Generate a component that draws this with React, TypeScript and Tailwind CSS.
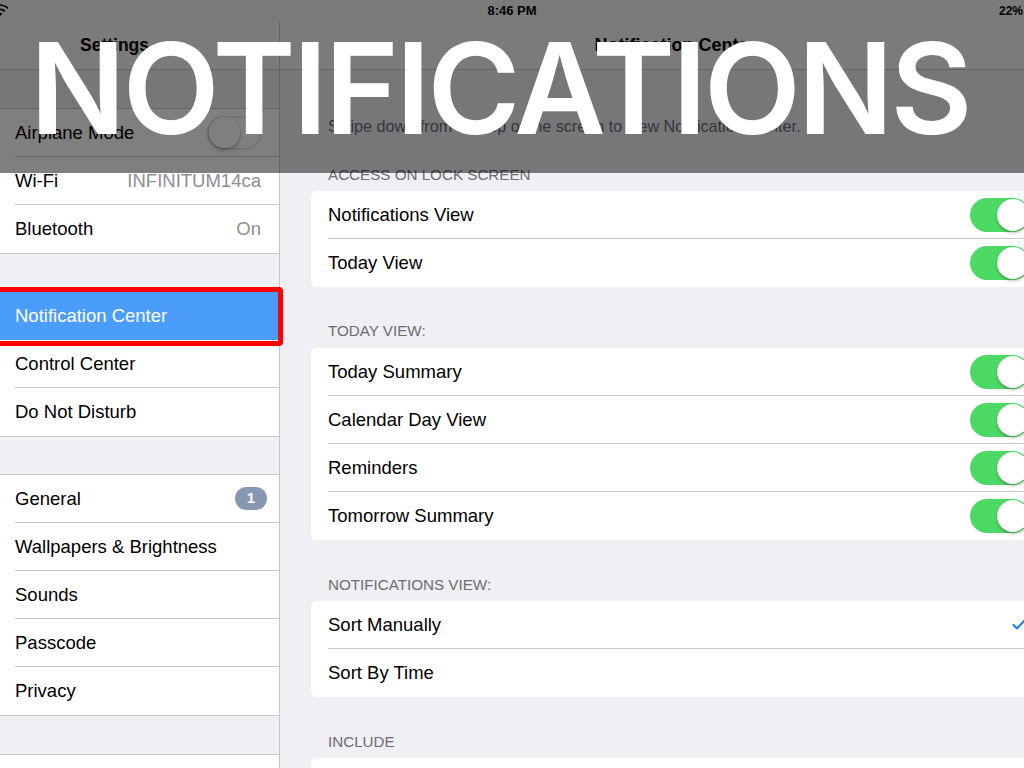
import React from "react";

const sans = "font-['Liberation_Sans',Arial,sans-serif]";

function Toggle({ on }: { on: boolean }) {
  if (on) {
    return (
      <div className="w-[60px] h-[34px] rounded-full bg-[#4cd964] flex items-center justify-end p-[1px]">
        <div className="w-[32px] h-[32px] rounded-full bg-white shadow-[0_2px_3px_rgba(0,0,0,0.25)]" />
      </div>
    );
  }
  return (
    <div className="w-[55px] h-[34px] rounded-full bg-white border-2 border-[#e5e5ea] flex items-center">
      <div className="w-[31px] h-[31px] rounded-full bg-white shadow-[0_2px_4px_rgba(0,0,0,0.3)]" />
    </div>
  );
}

function Check() {
  return (
    <svg width="14" height="11" viewBox="0 0 14 11">
      <polyline points="1.5,6 5,9.5 12.5,1.5" fill="none" stroke="#1a7cf5" strokeWidth="2" strokeLinecap="round" strokeLinejoin="round" />
    </svg>
  );
}

type SideRow = { label: string; value?: string; toggle?: boolean; badge?: string; selected?: boolean };

function SideGroup({ rows, className = "" }: { rows: SideRow[]; className?: string }) {
  return (
    <div className={`bg-white border-y border-[#c8c7cc] ${className}`}>
      {rows.map((r, i) => (
        <div key={r.label} className={`h-[48px] flex items-center pl-[15px] ${r.selected ? "bg-[#4b9dfb]" : ""}`}>
          <div
            className={`flex-1 h-full flex items-center justify-between ${r.badge ? "pr-[12px]" : "pr-[18px]"} ${
              i < rows.length - 1 && !r.selected && !rows[i + 1]?.selected ? "border-b border-[#c8c7cc]" : ""
            }`}
          >
            <span className={`text-[18.5px] ${r.selected ? "text-white" : "text-black"}`}>{r.label}</span>
            {r.value && <span className="text-[18.5px] text-[#8e8e93]">{r.value}</span>}
            {r.toggle !== undefined && (
              <div className="-mr-[1px]">
                <Toggle on={r.toggle} />
              </div>
            )}
            {r.badge && (
              <span className="w-[32px] h-[23px] rounded-full bg-[#8797b2] text-white text-[15px] font-bold flex items-center justify-center">
                {r.badge}
              </span>
            )}
          </div>
        </div>
      ))}
    </div>
  );
}

type CardRow = { label: string; toggle?: boolean; check?: boolean };

function Card({ rows }: { rows: CardRow[] }) {
  return (
    <div className="ml-[31px] mr-[30px] bg-white rounded-[6px]">
      {rows.map((r, i) => (
        <div key={r.label} className="h-[48px] flex items-center pl-[17px]">
          <div
            className={`flex-1 h-full flex items-center justify-between ${r.check ? "pr-[14px]" : "pr-[10px]"} ${
              i < rows.length - 1 ? "border-b border-[#c8c7cc]" : ""
            }`}
          >
            <span className="text-[18.5px] text-black">{r.label}</span>
            {r.toggle !== undefined && <Toggle on={r.toggle} />}
            {r.check && <Check />}
          </div>
        </div>
      ))}
    </div>
  );
}

function Header({ text, className = "" }: { text: string; className?: string }) {
  return (
    <div className={`h-[20px] pl-[48px] flex items-center text-[15.2px] text-[#6d6d72] uppercase ${className}`}>{text}</div>
  );
}

export default function App() {
  return (
    <div className={`relative w-[1024px] h-[768px] overflow-hidden bg-[#efeff4] ${sans}`}>
      {/* status bar */}
      <div className="relative h-[22px] bg-[#f7f7f8] flex items-center justify-center">
        <svg className="absolute -left-[9px] top-[4px]" width="18" height="13" viewBox="0 0 18 13">
          <path d="M1 4.5 A11 11 0 0 1 17 4.5" fill="none" stroke="#000" strokeWidth="1.6" />
          <path d="M4 7.5 A7 7 0 0 1 14 7.5" fill="none" stroke="#000" strokeWidth="1.6" />
          <path d="M9 12 L6.5 9.8 A4 4 0 0 1 11.5 9.8 Z" fill="#000" />
        </svg>
        <span className="text-[13px] font-bold text-black">8:46 PM</span>
        <span className="absolute right-[1px] top-[4px] text-[12px] font-bold text-black leading-[14px]">22%</span>
      </div>

      <div className="flex h-[746px]">
        {/* sidebar */}
        <div className="w-[280px] shrink-0 border-r border-[#c8c7cc]">
          <div className="h-[48px] bg-[#f7f7f8] border-b border-[#c8c7cc] flex items-center pl-[80px]">
            <span className="text-[17.5px] font-bold text-black">Settings</span>
          </div>
          <SideGroup
            className="mt-[38px]"
            rows={[
              { label: "Airplane Mode", toggle: false },
              { label: "Wi-Fi", value: "INFINITUM14ca" },
              { label: "Bluetooth", value: "On" },
            ]}
          />
          <SideGroup
            className="mt-[37px]"
            rows={[
              { label: "Notification Center", selected: true },
              { label: "Control Center" },
              { label: "Do Not Disturb" },
            ]}
          />
          <SideGroup
            className="mt-[37px]"
            rows={[
              { label: "General", badge: "1" },
              { label: "Wallpapers & Brightness" },
              { label: "Sounds" },
              { label: "Passcode" },
              { label: "Privacy" },
            ]}
          />
          <div className="mt-[38px] h-[48px] bg-white border-t border-[#c8c7cc]" />
        </div>

        {/* detail */}
        <div className="w-[790px] shrink-0">
          <div className="h-[48px] bg-[#f7f7f8] border-b border-[#c8c7cc] flex items-center justify-center">
            <span className="text-[18px] font-bold text-black">Notification Center</span>
          </div>
          <div className="mt-[46px] pl-[48px] h-[20px] flex items-center text-[16.2px] text-[#6d6d72]">
            Swipe down from the top of the screen to view Notification Center.
          </div>
          <Header className="mt-[29px] mb-[6px]" text="Access on Lock Screen" />
          <Card rows={[{ label: "Notifications View", toggle: true }, { label: "Today View", toggle: true }]} />
          <Header className="mt-[34px] mb-[7px]" text="Today View:" />
          <Card
            rows={[
              { label: "Today Summary", toggle: true },
              { label: "Calendar Day View", toggle: true },
              { label: "Reminders", toggle: true },
              { label: "Tomorrow Summary", toggle: true },
            ]}
          />
          <Header className="mt-[35px] mb-[6px]" text="Notifications View:" />
          <Card rows={[{ label: "Sort Manually", check: true }, { label: "Sort By Time" }]} />
          <Header className="mt-[35px] mb-[6px]" text="Include" />
          <div className="ml-[31px] mr-[30px] h-[60px] bg-white rounded-t-[6px]" />
        </div>
      </div>

      {/* red highlight around selected row */}
      <div className="absolute -left-[8px] top-[287px] w-[291px] h-[59px] border-[5px] border-[#ff0000] rounded-[4px]" />

      {/* title banner */}
      <div className="absolute left-0 top-0 w-full h-[173px] bg-black/50">
        <div className="pl-[30px] pt-[23px] font-['Inter',sans-serif] font-semibold text-white text-[126px] leading-[130px] tracking-[-3px]">
          NOTIFICATIONS
        </div>
      </div>
    </div>
  );
}
